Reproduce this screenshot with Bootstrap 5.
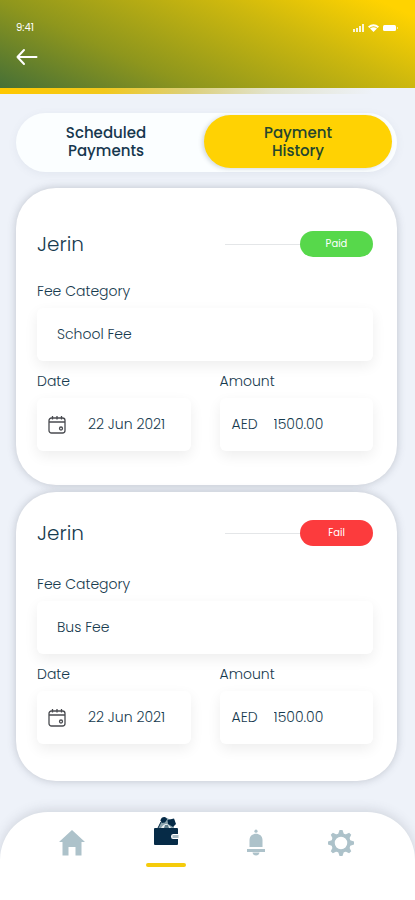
<!DOCTYPE html>
<html lang="en">
<head>
<meta charset="utf-8">
<meta name="viewport" content="width=device-width, initial-scale=1">
<title>Payment History</title>
<link href="https://cdn.jsdelivr.net/npm/bootstrap@5.3.0/dist/css/bootstrap.min.css" rel="stylesheet">
<style>
body { font-family: Poppins, Inter, sans-serif; color: #163a4e; background: #eef2f9; font-size: 14px; }
.top-bar { background: linear-gradient(24deg, #467036 0%, #8e961d 32%, #cdb80e 68%, #ffd300 94%); height: 88px; padding: 20px 16px 0; }
.clock { font-size: 10px; line-height: 16px; font-weight: 400; }
.back-link { width: 22px; margin-top: 12px; }
.accent-strip { height: 6px; background: linear-gradient(to right, #ffc800 0%, #f2c81c 25%, #dccf78 45%, #e2e3cd 65%, #eef2f9 90%); }
.content-area { padding: 19px 18px 31px 16px; }
.switcher { background: #fbfeff; padding: 2px 5px 4px 0; box-shadow: 0 2px 8px rgba(90,105,130,.08); }
.switch-btn { flex: 1 1 0; font-size: 15px; line-height: 18px; font-weight: 500; color: #16374e; padding: 9px 24px; border: 0; height: 53px; }
.switch-btn:first-child { margin-right: 4px; }
.switch-btn:first-child { padding-left: 20px; }
.switch-btn.active { background: #ffd203; color: #24452f; box-shadow: -2px 1px 4px rgba(60,80,100,.2); }
.pay-card { background: #fff; border-radius: 40px; box-shadow: 0 0 9px rgba(70,75,95,.28); padding: 43px 24px 34px 21px; margin-top: 16px; }
.pay-card + .pay-card { margin-top: 7px; padding-top: 28px; padding-bottom: 37px; }
.pay-head { height: 26px; margin-bottom: 24px; }
.pay-card + .pay-card .pay-head { margin-bottom: 28px; }
.pay-name { font-size: 20px; line-height: 24px; font-weight: 300; }
.status-line { width: 75px; height: 1px; background: #e4e6e8; }
.status-pill { width: 73px; height: 26px; font-size: 10px; line-height: 26px; }
.status-paid { background: #57d84b; }
.status-fail { background: #fc3b3d; }
.field-label { display: block; line-height: 20px; margin-bottom: 7px; font-weight: 300; }
.field-box { height: 53px; border-radius: 6px; background: #fff; box-shadow: 0 5px 14px rgba(0,0,0,.07); }
.field-box input { border: 0; background: transparent; outline: 0; color: inherit; font-weight: 300; padding: 0; min-width: 0; width: 100%; }
.category-box { padding-left: 20px; margin-bottom: 10px; }
.pair { gap: 29px; }
.pair > div { flex: 1 1 0; min-width: 0; }
.date-box { padding-left: 11px; gap: 22px; }
.amount-box { padding-left: 12px; gap: 16px; font-weight: 300; }
.bottom-nav { background: #fff; border-radius: 48px 48px 0 0; height: 88px; padding: 0 60px 0 59px; box-shadow: 0 -2px 12px rgba(70,75,95,.18); }
.bottom-nav a { padding-top: 17px; color: #adc2ca; }
.bottom-nav a.current { padding-top: 4px; color: #062b47; }
.current-mark { width: 40px; height: 4px; border-radius: 2px; background: #f5cb0b; margin-top: 17px; }
</style>
</head>
<body>
<div class="d-flex flex-column min-vh-100">
<header>
  <div class="top-bar text-white">
    <div class="d-flex justify-content-between align-items-center">
      <span class="clock">9:41</span>
      <svg width="46" height="10" viewBox="0 0 46 10" fill="#fff" role="img" aria-label="Signal, wifi, battery">
        <g opacity=".85"><rect x="0" y="6" width="2" height="3"/><rect x="3" y="5" width="2" height="4"/><rect x="6" y="3" width="2" height="6"/><rect x="9" y="1" width="2" height="8"/></g>
        <path d="M15 3.5Q20.500-1 26 3.500L24.700 5Q20.500 1.700 16.300 5Z"/><path d="M17 5.600Q20.500 2.800 24 5.600L20.500 9Z"/>
        <rect x="30" y="2" width="13" height="6" rx="1.500"/><rect x="44" y="4" width="1" height="2" opacity=".6"/>
      </svg>
    </div>
    <a href="#" class="back-link d-block text-white" aria-label="Back">
      <svg class="d-block" width="22" height="18" viewBox="0 0 22 18" fill="none" stroke="currentColor" stroke-width="2" stroke-linecap="round" stroke-linejoin="round"><path d="M20.500 9H1.500M8 2 1.500 9 8 16"/></svg>
    </a>
  </div>
  <div class="accent-strip"></div>
</header>

<main class="content-area flex-grow-1">
  <div class="switcher rounded-pill d-flex">
    <button type="button" class="switch-btn btn rounded-pill">Scheduled<br>Payments</button>
    <button type="button" class="switch-btn btn rounded-pill active" aria-pressed="true">Payment<br>History</button>
  </div>

  <section class="pay-card">
    <div class="pay-head d-flex align-items-center">
      <h2 class="pay-name mb-0 me-auto">Jerin</h2>
      <div class="status-line"></div>
      <span class="status-pill status-paid rounded-pill text-white text-center">Paid</span>
    </div>
    <label class="field-label" for="cat1">Fee Category</label>
    <div class="field-box category-box d-flex align-items-center"><input id="cat1" value="School Fee" readonly></div>
    <div class="pair d-flex">
      <div>
        <label class="field-label" for="date1">Date</label>
        <div class="field-box date-box d-flex align-items-center">
          <svg class="flex-shrink-0" width="18" height="18" viewBox="0 0 18 18" fill="none" stroke="#494b50" stroke-width="1.300"><rect x="1" y="2" width="16" height="15" rx="2.500"/><path d="M1 6h16M4.500 0v3.500M9 0v3.500M13.500 0v3.500"/><circle cx="13" cy="12.500" r="1.500"/></svg>
          <input id="date1" value="22 Jun 2021" readonly>
        </div>
      </div>
      <div>
        <label class="field-label" for="amount1">Amount</label>
        <div class="field-box amount-box d-flex align-items-center"><span>AED</span><input id="amount1" value="1500.00" readonly></div>
      </div>
    </div>
  </section>

  <section class="pay-card">
    <div class="pay-head d-flex align-items-center">
      <h2 class="pay-name mb-0 me-auto">Jerin</h2>
      <div class="status-line"></div>
      <span class="status-pill status-fail rounded-pill text-white text-center">Fail</span>
    </div>
    <label class="field-label" for="cat2">Fee Category</label>
    <div class="field-box category-box d-flex align-items-center"><input id="cat2" value="Bus Fee" readonly></div>
    <div class="pair d-flex">
      <div>
        <label class="field-label" for="date2">Date</label>
        <div class="field-box date-box d-flex align-items-center">
          <svg class="flex-shrink-0" width="18" height="18" viewBox="0 0 18 18" fill="none" stroke="#494b50" stroke-width="1.300"><rect x="1" y="2" width="16" height="15" rx="2.500"/><path d="M1 6h16M4.500 0v3.500M9 0v3.500M13.500 0v3.500"/><circle cx="13" cy="12.500" r="1.500"/></svg>
          <input id="date2" value="22 Jun 2021" readonly>
        </div>
      </div>
      <div>
        <label class="field-label" for="amount2">Amount</label>
        <div class="field-box amount-box d-flex align-items-center"><span>AED</span><input id="amount2" value="1500.00" readonly></div>
      </div>
    </div>
  </section>
</main>

<nav class="bottom-nav d-flex justify-content-between" aria-label="Main">
  <a href="#" class="d-flex flex-column align-items-center" aria-label="Home">
    <svg width="26" height="28" viewBox="0 0 26 28" fill="currentColor"><path d="M13 1 26 13H22.500V26.500H16.500V18H9.500V26.500H3.500V13H0Z"/></svg>
  </a>
  <a href="#" class="current d-flex flex-column align-items-center" aria-label="Payments" aria-current="page">
    <svg width="26" height="30" viewBox="0 0 26 30" fill="currentColor"><path d="M5 12 9 3 14 2 20 5 21 12Z" fill="#8ba4ae"/><path d="M7.500 4.500C8 0 14 0 14 3.500L12 6.500 9 7Z"/><path d="M14.500 4 21 2.500 23 8 20 11 15 8Z"/><path d="M8 12Q13 4 18 12Z" fill="#e8eff2"/><path d="M11 12 12 9H15L16 12Z" fill="#5f7e8c"/><path d="M5 12 8 6" stroke="currentColor"/><path d="M2 12H24Q25 12 25 13V18H20Q18 18 18 20.500T20 23H25V28Q25 29 24 29H2Q1 29 1 28V13Q1 12 2 12Z"/><rect x="19.500" y="19" width="6" height="3" fill="#a9bbc4"/></svg>
    <span class="current-mark"></span>
  </a>
  <a href="#" class="d-flex flex-column align-items-center" aria-label="Notifications">
    <svg width="20" height="28" viewBox="0 0 20 28" fill="currentColor"><circle cx="10" cy="2.200" r="1.600"/><path d="M3.500 18V11C3.500 2.500 16.500 2.500 16.500 11V18Z"/><path d="M1 20H19V23H1ZM6.500 23.500H13.500Q13 26.500 10 26.500T6.500 23.500Z"/></svg>
  </a>
  <a href="#" class="d-flex flex-column align-items-center" aria-label="Settings">
    <svg width="28" height="28" viewBox="-14 -14 28 28"><circle r="8" fill="none" stroke="currentColor" stroke-width="3.500"/><g fill="currentColor"><path id="tooth" d="M-3-8.500-1.500-13H1.500L3-8.500Z"/><use href="#tooth" transform="rotate(45)"/><use href="#tooth" transform="rotate(90)"/><use href="#tooth" transform="rotate(135)"/><use href="#tooth" transform="rotate(180)"/><use href="#tooth" transform="rotate(225)"/><use href="#tooth" transform="rotate(270)"/><use href="#tooth" transform="rotate(315)"/></g></svg>
  </a>
</nav>
</div>
<script src="https://cdn.jsdelivr.net/npm/bootstrap@5.3.0/dist/js/bootstrap.bundle.min.js"></script>
</body>
</html>
